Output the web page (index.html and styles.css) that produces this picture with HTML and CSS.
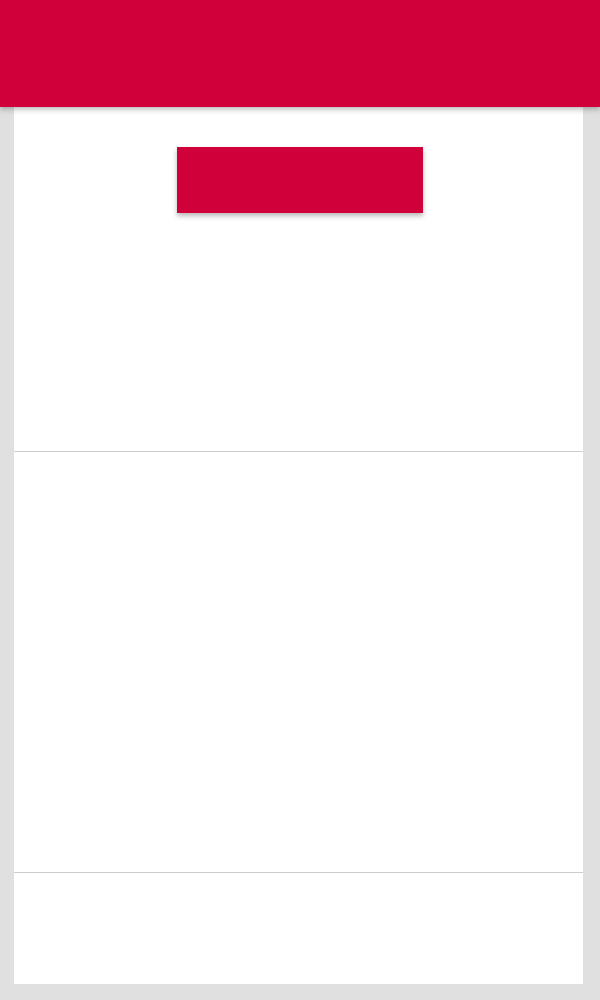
FILE: index.html
```html
<!DOCTYPE html>
<html>
<head>
<meta charset="utf-8">
<link rel="stylesheet" href="styles.css">
</head>
<body>
<header class="app-bar"></header>
<main class="card">
  <section class="section section-top">
    <div class="action-button"></div>
  </section>
  <section class="section section-middle"></section>
  <section class="section section-bottom"></section>
</main>
</body>
</html>
```
FILE: styles.css
```css
html, body {
  margin: 0;
  padding: 0;
}
body {
  background: #e0e0e0;
  width: 600px;
  height: 1000px;
  overflow: hidden;
  font-family: Roboto, "Liberation Sans", sans-serif;
  display: flex;
  flex-direction: column;
}
.app-bar {
  height: 107px;
  background: #d0003a;
  box-shadow: 0 2px 6px rgba(0,0,0,0.3);
  position: relative;
  z-index: 2;
  flex: none;
}
.card {
  margin-left: 14px;
  width: 569px;
  height: 877px;
  background: #ffffff;
  display: flex;
  flex-direction: column;
  flex: none;
}
.section {
  box-sizing: border-box;
}
.section-top {
  height: 345px;
  border-bottom: 1px solid #cccccc;
  padding-top: 40px;
  padding-left: 3px;
  display: flex;
  justify-content: center;
  align-items: flex-start;
}
.section-middle {
  height: 421px;
  border-bottom: 1px solid #cccccc;
}
.section-bottom {
  flex: 1;
}
.action-button {
  width: 246px;
  height: 66px;
  background: #d0003a;
  box-shadow: 0 3px 5px rgba(0,0,0,0.28);
}
```
